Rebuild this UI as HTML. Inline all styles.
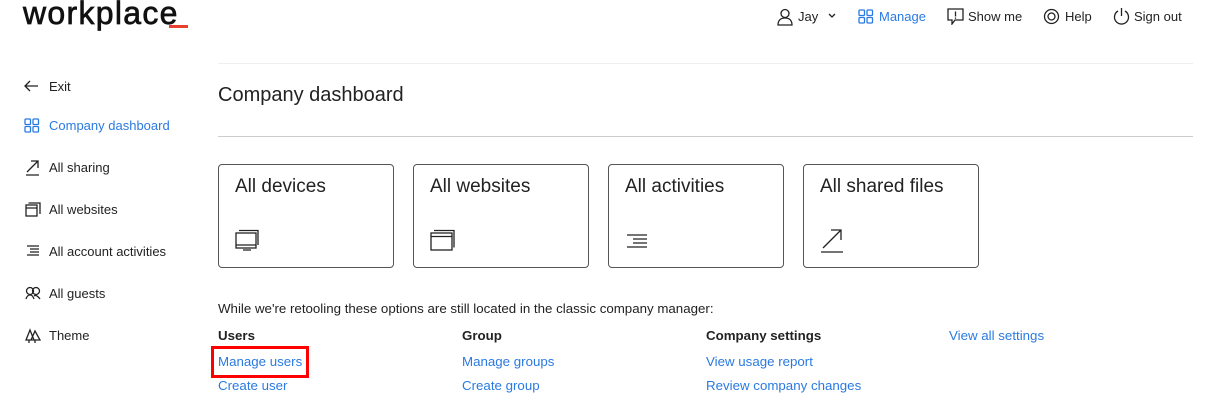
<!DOCTYPE html>
<html><head><style>
*{margin:0;padding:0;box-sizing:border-box}
body{width:1216px;height:416px;background:#fff;font-family:"Liberation Sans",sans-serif;color:#222;position:relative;overflow:hidden}
.a{position:absolute;white-space:nowrap}
.blue{color:#2a7ae2}
svg{position:absolute;fill:none;stroke:#222;stroke-width:1.3}
.nav{font-size:13px}
.card{position:absolute;top:164px;width:176px;height:104px;border:1px solid #555;border-radius:4px}
.card span{position:absolute;left:16px;top:11px;font-size:19px;color:#222}
.l{font-size:13.3px}
</style></head><body>
<div class="a" style="left:23px;top:-3px;font-size:32px;line-height:32px;letter-spacing:1.3px;color:#111;-webkit-text-stroke:0.7px #111">workplace</div>
<div class="a" style="left:169px;top:25px;width:19px;height:3px;background:#e8402a"></div>

<!-- top nav -->
<svg style="left:777px;top:8px" width="16" height="18"><circle cx="8" cy="5.5" r="4"/><path d="M1 17c0-5 3-7 7-7s7 2 7 7z"/></svg>
<div class="a nav" style="left:798px;top:9px">Jay</div>
<svg style="left:828px;top:13px" width="8" height="6"><path d="M1 1l3 3 3-3"/></svg>
<svg style="left:858px;top:9px;stroke:#2a7ae2" width="16" height="15"><rect x="1" y="1" width="5.5" height="5.5" rx="1"/><rect x="9" y="1" width="5.5" height="5.5" rx="1"/><rect x="1" y="8.5" width="5.5" height="5.5" rx="1"/><rect x="9" y="8.5" width="5.5" height="5.5" rx="1"/></svg>
<div class="a nav blue" style="left:879px;top:9px">Manage</div>
<svg style="left:947px;top:8px" width="17" height="17"><path d="M1 1h15v11H8l-3 4v-4H1z"/><path d="M8.5 3.5v5M8.5 9.5v1.3"/></svg>
<div class="a nav" style="left:968px;top:9px">Show me</div>
<svg style="left:1043px;top:8px" width="17" height="17"><circle cx="8.5" cy="8.5" r="7"/><circle cx="8.5" cy="8.5" r="3.5"/></svg>
<div class="a nav" style="left:1065px;top:9px">Help</div>
<svg style="left:1113px;top:7px" width="17" height="18"><path d="M5 4a7 7 0 1 0 7 0M8.5 1v8"/></svg>
<div class="a nav" style="left:1134px;top:9px">Sign out</div>

<!-- sidebar -->
<svg style="left:24px;top:80px" width="15" height="12"><path d="M14 6H1M6 1L1 6l5 5"/></svg>
<div class="a nav" style="left:49px;top:79px">Exit</div>
<svg style="left:24px;top:118px;stroke:#2a7ae2" width="16" height="15"><rect x="1" y="1" width="5.5" height="5.5" rx="1"/><rect x="9" y="1" width="5.5" height="5.5" rx="1"/><rect x="1" y="8.5" width="5.5" height="5.5" rx="1"/><rect x="9" y="8.5" width="5.5" height="5.5" rx="1"/></svg>
<div class="a nav blue" style="left:49px;top:118px">Company dashboard</div>
<svg style="left:25px;top:160px" width="15" height="16"><path d="M1 15h13M2 12L13 1M6 1h7v7"/></svg>
<div class="a nav" style="left:49px;top:160px">All sharing</div>
<svg style="left:25px;top:202px" width="16" height="15"><rect x="1" y="3" width="11" height="11"/><path d="M1 6h11M3.5 1H15v11"/></svg>
<div class="a nav" style="left:49px;top:202px">All websites</div>
<svg style="left:26px;top:245px" width="14" height="12"><path d="M1 1h12M4 4h9M4 7h9M1 10h12"/></svg>
<div class="a nav" style="left:49px;top:244px">All account activities</div>
<svg style="left:25px;top:286px" width="16" height="14"><circle cx="5" cy="5" r="3.5"/><circle cx="11" cy="5" r="3.5"/><path d="M1 13c1-3 2-4 4-4s3 1 4 4M9 10c1-1 3-1 6 3"/></svg>
<div class="a nav" style="left:49px;top:286px">All guests</div>
<svg style="left:25px;top:328px" width="16" height="15"><path d="M1 12L5 2l4 10zM6 12l4-9 5 9zM4 12v3M10 12v3"/></svg>
<div class="a nav" style="left:49px;top:328px">Theme</div>

<!-- main -->
<div class="a" style="left:218px;top:63px;width:975px;height:1px;background:#eee"></div>
<div class="a" style="left:218px;top:84px;font-size:20px">Company dashboard</div>
<div class="a" style="left:218px;top:136px;width:975px;height:1px;background:#ccc"></div>

<div class="card" style="left:218px"><span>All devices</span>
<svg style="left:16px;top:64px" width="26" height="24"><rect x="1" y="4" width="20" height="15"/><path d="M1 16h20M8 21h8M4 1.5h19V16"/></svg></div>
<div class="card" style="left:413px"><span>All websites</span>
<svg style="left:16px;top:64px" width="26" height="22"><rect x="1" y="4" width="21" height="17"/><path d="M1 7.5h21M4 1.5h20v17"/></svg></div>
<div class="card" style="left:608px"><span>All activities</span>
<svg style="left:17px;top:69px" width="22" height="14"><path d="M1 1h20M7 5h14M7 9h14M1 13h20"/></svg></div>
<div class="card" style="left:803px"><span>All shared files</span>
<svg style="left:16px;top:64px" width="24" height="24"><path d="M1 23h22M3 19L21 1M11 1h10v10"/></svg></div>

<div class="a l" style="left:218px;top:301px">While we're retooling these options are still located in the classic company manager:</div>
<div class="a l" style="left:218px;top:328px;font-weight:bold">Users</div>
<div class="a l blue" style="left:218px;top:354px">Manage users</div>
<div class="a l blue" style="left:218px;top:378px">Create user</div>
<div class="a" style="left:211px;top:346px;width:98px;height:32px;border:3px solid #f00"></div>
<div class="a l" style="left:462px;top:328px;font-weight:bold">Group</div>
<div class="a l blue" style="left:462px;top:354px">Manage groups</div>
<div class="a l blue" style="left:462px;top:378px">Create group</div>
<div class="a l" style="left:706px;top:328px;font-weight:bold">Company settings</div>
<div class="a l blue" style="left:706px;top:354px">View usage report</div>
<div class="a l blue" style="left:706px;top:378px">Review company changes</div>
<div class="a l blue" style="left:949px;top:328px">View all settings</div>
</body></html>
